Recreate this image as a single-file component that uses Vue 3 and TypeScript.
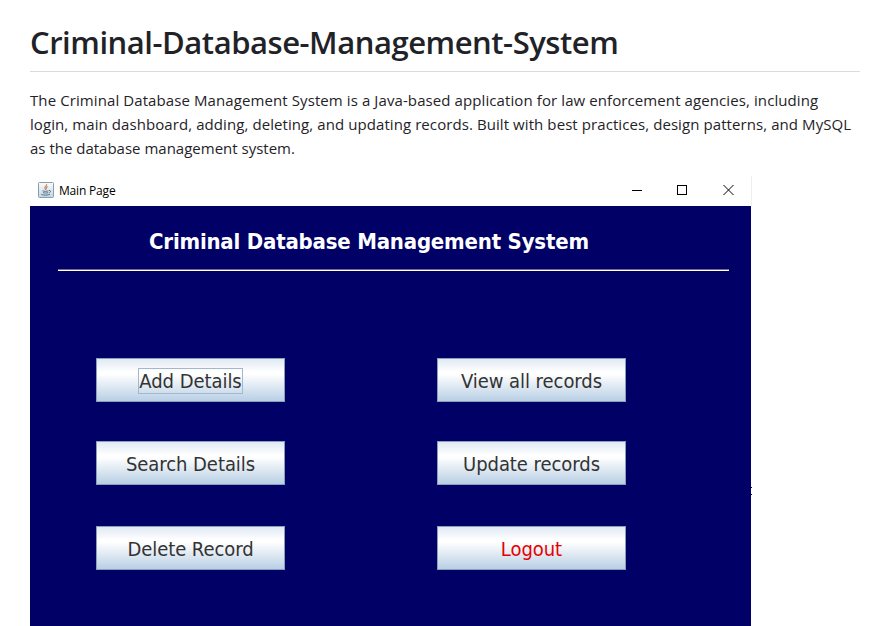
<script setup lang="ts">
interface Action {
  label: string
  tone?: 'focused' | 'danger'
}

const lines: string[] = [
  'The Criminal Database Management System is a Java-based application for law enforcement agencies, including',
  'login, main dashboard, adding, deleting, and updating records. Built with best practices, design patterns, and MySQL',
  'as the database management system.',
]

const actions: Action[] = [
  { label: 'Add Details', tone: 'focused' },
  { label: 'View all records' },
  { label: 'Search Details' },
  { label: 'Update records' },
  { label: 'Delete Record' },
  { label: 'Logout', tone: 'danger' },
]
</script>

<template>
  <main class="page">
    <h1><span>Criminal-Database-Management-System</span></h1>
    <p class="intro">
      <span v-for="(line, i) in lines" :key="i" class="line" :class="`line-${i}`">{{ line }}</span>
    </p>
    <section class="window">
      <header class="titlebar">
        <svg class="java" width="16" height="16" viewBox="0 0 16 16">
          <defs>
            <linearGradient id="jbg" x1="0" y1="0" x2="0" y2="1">
              <stop offset="0" stop-color="#fafcfd" />
              <stop offset="1" stop-color="#c3d5e1" />
            </linearGradient>
          </defs>
          <rect x=".5" y=".5" width="15" height="15" rx="1" fill="url(#jbg)" stroke="#8a9dab" />
          <path d="M8.6 2C9.4 3.9 6 4.6 6.9 6.4L7.8 8M9.8 4.4C8 5.3 7.8 6 8.7 7.1" fill="none" stroke="#c98563" stroke-width="1.1" />
          <path d="M4.500 8.800c1.400.7 4.600.7 6 0M5 10.600c1.400.6 3.800.6 5.200 0M3.400 12.400c2.400 1.100 6.400 1 8.600-.2M11 8.500c2.200-.3 2 1.700.1 2.300" fill="none" stroke="#53758c" stroke-width="1" />
        </svg>
        <span class="caption">Main Page</span>
        <svg class="controls" width="104" height="12" viewBox="0 0 104 12" fill="none" stroke="#000" stroke-width="1">
          <path d="M1 6.500h10" />
          <rect x="46.500" y="1.500" width="9" height="9" />
          <path d="M92.500 1l10 10M102.500 1l-10 10" />
        </svg>
      </header>
      <div class="body">
        <h2><span>Criminal Database Management System</span></h2>
        <div class="rule"></div>
        <div class="grid">
          <button v-for="a in actions" :key="a.label" type="button" :class="a.tone">
            <span>{{ a.label }}</span>
          </button>
        </div>
        <i class="speck"></i>
      </div>
    </section>
  </main>
</template>

<style>
body {
  background: #fff;
  overflow: hidden;
}
</style>

<style scoped>
.page {
  box-sizing: border-box;
  width: 891px;
  height: 626px;
  padding: 19px 31px 0 30px;
  overflow: hidden;
  color: #1f2328;
  font-family: 'Open Sans', 'Noto Sans', sans-serif;
}
h1 {
  box-sizing: border-box;
  height: 53px;
  margin: 0;
  border-bottom: 1px solid #d8dce0;
  font-size: 31px;
  line-height: 47px;
  font-weight: 600;
  letter-spacing: -0.46px;
  white-space: nowrap;
}
.intro {
  display: flex;
  flex-direction: column;
  margin: 16px 0;
  font-size: 15px;
  line-height: 24px;
  white-space: nowrap;
}
.line {
  align-self: flex-start;
}
.line-0 {
  letter-spacing: 0.095px;
}
.line-1 {
  letter-spacing: 0.08px;
}
.window {
  width: 722px;
}
.titlebar {
  display: flex;
  align-items: center;
  box-sizing: border-box;
  width: 722px;
  height: 30px;
  padding: 0 16px 2px 8px;
  border-right: 1px solid #eee;
}
.caption {
  margin-left: 5px;
  padding-top: 2px;
  color: #000;
  font-size: 12px;
  line-height: 16px;
  letter-spacing: -0.18px;
}
.controls {
  margin-left: auto;
}
.body {
  position: relative;
  width: 721px;
  height: 420px;
  background: #000066;
  font-family: 'DejaVu Sans Condensed', 'DejaVu Sans', sans-serif;
  font-stretch: condensed;
}
h2 {
  box-sizing: border-box;
  margin: 0;
  padding: 21px 0 0 119px;
  height: 63px;
  color: #fff;
  font-size: 22px;
  line-height: 30px;
  font-weight: 700;
  letter-spacing: -0.2px;
  white-space: nowrap;
}
.rule {
  width: 671px;
  height: 1px;
  margin-left: 28px;
  background: #fff;
  border-top: 1px solid #6f7080;
}
.grid {
  display: grid;
  grid-template-columns: 189px 189px;
  grid-template-rows: 44px 44px 44px;
  column-gap: 152px;
  row-gap: 39px;
  padding: 87px 0 0 66px;
}
button {
  display: flex;
  align-items: center;
  justify-content: center;
  box-sizing: border-box;
  height: 44px;
  padding: 2px 0 0;
  border: 1px solid #8ba0b8;
  background: linear-gradient(#dfe9f3 0%, #fff 31%, #fff 36%, #dce7f1 68%, #b8cfe5 100%);
  color: #333;
  font-family: inherit;
  font-stretch: condensed;
  font-size: 20px;
  line-height: 24px;
  letter-spacing: -0.05px;
  white-space: nowrap;
}
button:nth-child(n + 5) {
  margin-top: 2px;
}
.focused span {
  outline: 1px solid #a3b8cc;
}
.danger {
  color: #e60000;
}
.speck {
  position: absolute;
  left: 721px;
  top: 281px;
  width: 1px;
  height: 1px;
  background: #000066;
  box-shadow: 0 7px #000066;
}
</style>
